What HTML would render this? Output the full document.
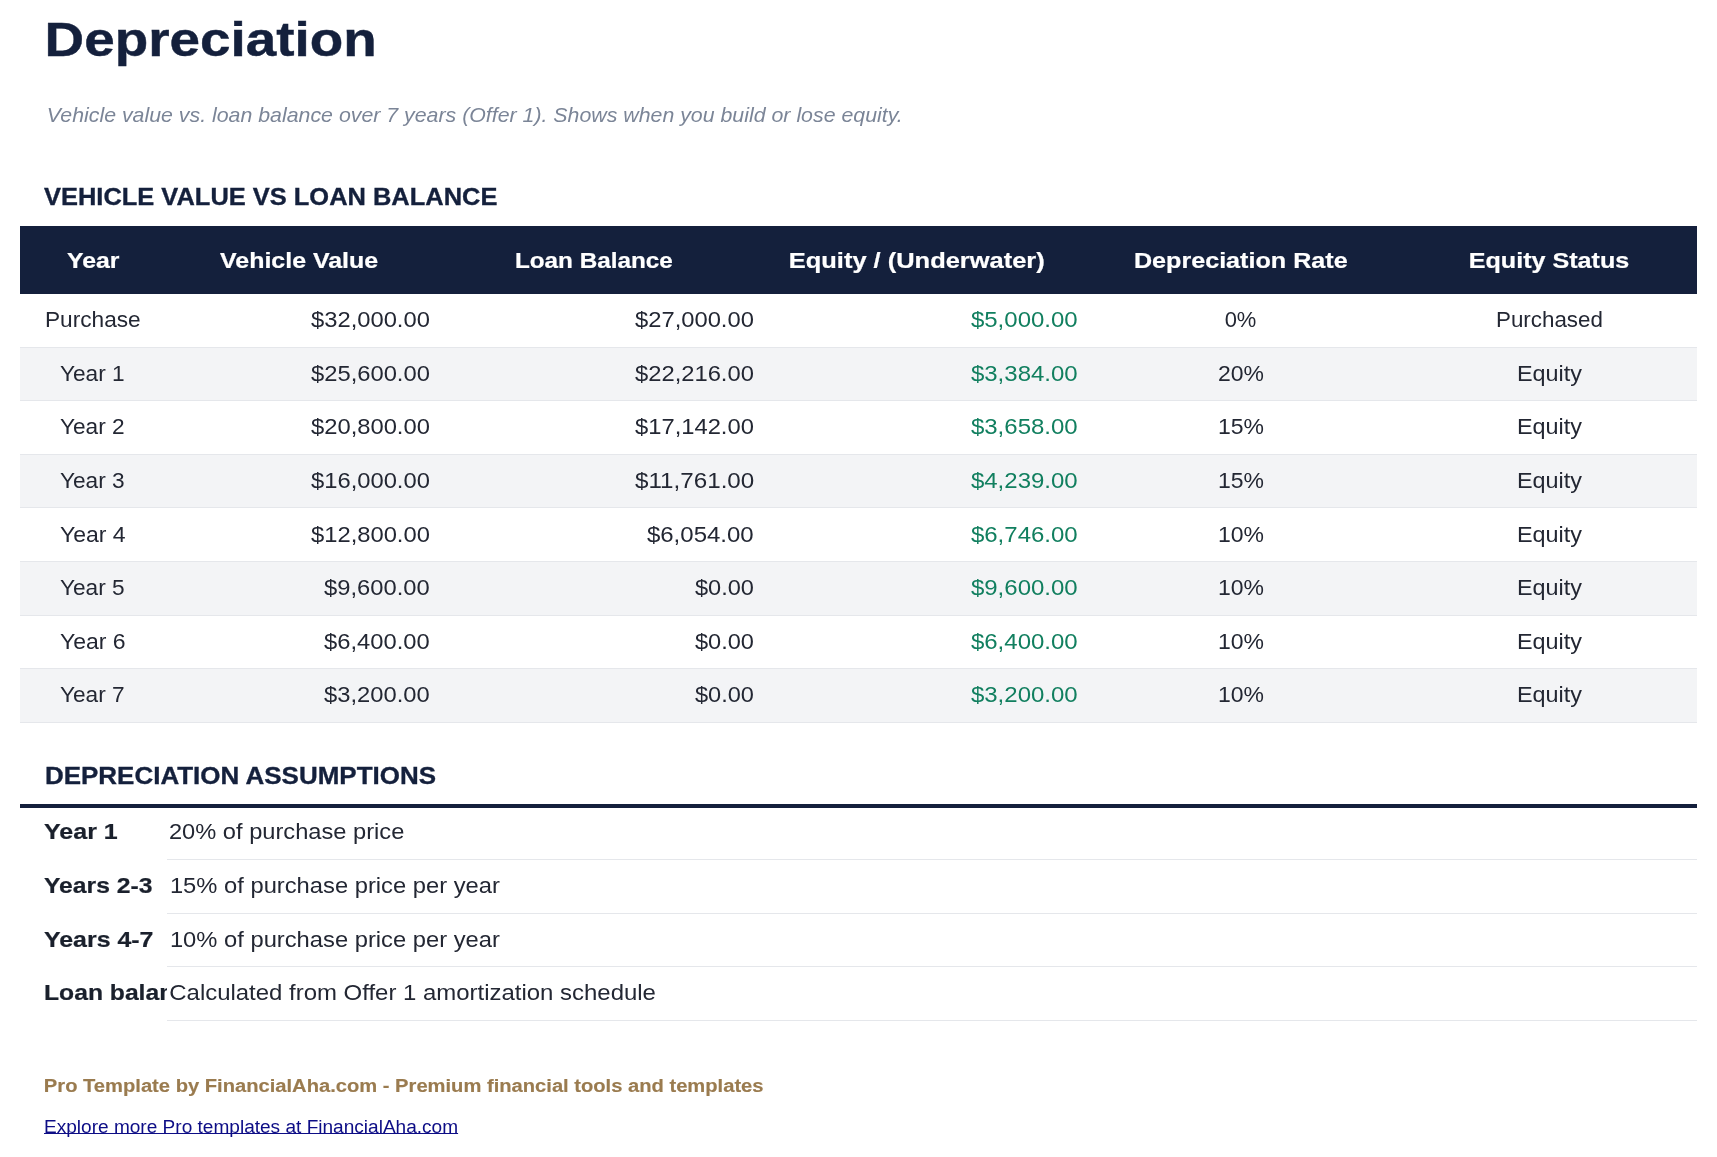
<!DOCTYPE html><html><head><meta charset="utf-8"><style>*{margin:0;padding:0;box-sizing:border-box}
html,body{width:1717px;height:1157px;background:#fff;overflow:hidden;position:relative;font-family:"Liberation Sans", sans-serif}
.t{position:absolute;white-space:nowrap;line-height:1}
.s{display:inline-block;white-space:nowrap}
</style></head><body><div id="wrap" style="position:absolute;left:0;top:0;width:1717px;height:1157px;will-change:transform">
<div style="position:absolute;left:20px;top:226px;width:1677px;height:68px;background:#14203c"></div>
<div style="position:absolute;left:20px;top:294.00px;width:1677px;height:53.60px;background:#ffffff;border-bottom:1px solid #e5e7eb"></div>
<div style="position:absolute;left:20px;top:347.60px;width:1677px;height:53.60px;background:#f3f4f6;border-bottom:1px solid #e5e7eb"></div>
<div style="position:absolute;left:20px;top:401.20px;width:1677px;height:53.60px;background:#ffffff;border-bottom:1px solid #e5e7eb"></div>
<div style="position:absolute;left:20px;top:454.80px;width:1677px;height:53.60px;background:#f3f4f6;border-bottom:1px solid #e5e7eb"></div>
<div style="position:absolute;left:20px;top:508.40px;width:1677px;height:53.60px;background:#ffffff;border-bottom:1px solid #e5e7eb"></div>
<div style="position:absolute;left:20px;top:562.00px;width:1677px;height:53.60px;background:#f3f4f6;border-bottom:1px solid #e5e7eb"></div>
<div style="position:absolute;left:20px;top:615.60px;width:1677px;height:53.60px;background:#ffffff;border-bottom:1px solid #e5e7eb"></div>
<div style="position:absolute;left:20px;top:669.20px;width:1677px;height:53.60px;background:#f3f4f6;border-bottom:1px solid #e5e7eb"></div>
<div style="position:absolute;left:20px;top:804px;width:1677px;height:4px;background:#14203c"></div>
<div style="position:absolute;left:167px;top:859.00px;width:1530px;height:1px;background:#e5e7eb"></div>
<div style="position:absolute;left:167px;top:912.60px;width:1530px;height:1px;background:#e5e7eb"></div>
<div style="position:absolute;left:167px;top:966.20px;width:1530px;height:1px;background:#e5e7eb"></div>
<div style="position:absolute;left:167px;top:1019.80px;width:1530px;height:1px;background:#e5e7eb"></div>
<div class="t" style="top:14.96px;font-size:48.28px;font-weight:bold;-webkit-text-stroke:0.45px #14203c;font-style:normal;color:#14203c;letter-spacing:0px;left:44px;"><span class="s" id="title" style="transform:translateX(0.59px) scaleX(1.1359);transform-origin:left center;">Depreciation</span></div>
<div class="t" style="top:106.07px;font-size:19.68px;font-weight:normal;font-style:italic;color:#7b8597;letter-spacing:0px;left:46.5px;"><span class="s" id="sub" style="transform:translateX(-0.13px) scaleX(1.0840);transform-origin:left center;">Vehicle value vs. loan balance over 7 years (Offer 1). Shows when you build or lose equity.</span></div>
<div class="t" style="top:185.21px;font-size:24.45px;font-weight:bold;-webkit-text-stroke:0.35px #14203c;font-style:normal;color:#14203c;letter-spacing:0px;left:44px;"><span class="s" id="h2a" style="transform:translateX(0.00px) scaleX(1.0414);transform-origin:left center;">VEHICLE VALUE VS LOAN BALANCE</span></div>
<div class="t" style="top:249.65px;font-size:21.95px;font-weight:bold;-webkit-text-stroke:0.22px #ffffff;font-style:normal;color:#ffffff;letter-spacing:0px;left:-307px;width:800px;text-align:center;"><span class="s" id="th0" style="transform:translateX(0.00px) scaleX(1.1304);transform-origin:center center;">Year</span></div>
<div class="t" style="top:249.65px;font-size:21.95px;font-weight:bold;-webkit-text-stroke:0.22px #ffffff;font-style:normal;color:#ffffff;letter-spacing:0px;left:-101px;width:800px;text-align:center;"><span class="s" id="th1" style="transform:translateX(0.57px) scaleX(1.1367);transform-origin:center center;">Vehicle Value</span></div>
<div class="t" style="top:249.65px;font-size:21.95px;font-weight:bold;-webkit-text-stroke:0.22px #ffffff;font-style:normal;color:#ffffff;letter-spacing:0px;left:193.5px;width:800px;text-align:center;"><span class="s" id="th2" style="transform:translateX(0.50px) scaleX(1.1064);transform-origin:center center;">Loan Balance</span></div>
<div class="t" style="top:249.65px;font-size:21.95px;font-weight:bold;-webkit-text-stroke:0.22px #ffffff;font-style:normal;color:#ffffff;letter-spacing:0px;left:517px;width:800px;text-align:center;"><span class="s" id="th3" style="transform:translateX(-0.58px) scaleX(1.1598);transform-origin:center center;">Equity / (Underwater)</span></div>
<div class="t" style="top:249.65px;font-size:21.95px;font-weight:bold;-webkit-text-stroke:0.22px #ffffff;font-style:normal;color:#ffffff;letter-spacing:0px;left:840.5px;width:800px;text-align:center;"><span class="s" id="th4" style="transform:translateX(0.50px) scaleX(1.1459);transform-origin:center center;">Depreciation Rate</span></div>
<div class="t" style="top:249.65px;font-size:21.95px;font-weight:bold;-webkit-text-stroke:0.22px #ffffff;font-style:normal;color:#ffffff;letter-spacing:0px;left:1149.5px;width:800px;text-align:center;"><span class="s" id="th5" style="transform:translateX(-0.07px) scaleX(1.1449);transform-origin:center center;">Equity Status</span></div>
<div class="t" style="top:309.15px;font-size:21.95px;font-weight:normal;font-style:normal;color:#232733;letter-spacing:0px;left:-306.5px;width:800px;text-align:center;"><span class="s" id="r0c0" style="transform:translateX(-0.52px) scaleX(1.0333);transform-origin:center center;">Purchase</span></div>
<div class="t" style="top:309.15px;font-size:21.95px;font-weight:normal;font-style:normal;color:#232733;letter-spacing:0px;right:1287.2px;text-align:right;"><span class="s" id="r0c1" style="transform:translateX(0.07px) scaleX(1.0826);transform-origin:right center;">$32,000.00</span></div>
<div class="t" style="top:309.15px;font-size:21.95px;font-weight:normal;font-style:normal;color:#232733;letter-spacing:0px;right:963px;text-align:right;"><span class="s" id="r0c2" style="transform:translateX(0.08px) scaleX(1.0826);transform-origin:right center;">$27,000.00</span></div>
<div class="t" style="top:309.15px;font-size:21.95px;font-weight:normal;font-style:normal;color:#117f5f;letter-spacing:0px;right:639px;text-align:right;"><span class="s" id="r0c3" style="transform:translateX(0.09px) scaleX(1.0938);transform-origin:right center;">$5,000.00</span></div>
<div class="t" style="top:309.15px;font-size:21.95px;font-weight:normal;font-style:normal;color:#232733;letter-spacing:0px;left:840.5px;width:800px;text-align:center;"><span class="s" id="r0c4" style="">0%</span></div>
<div class="t" style="top:309.15px;font-size:21.95px;font-weight:normal;font-style:normal;color:#232733;letter-spacing:0px;left:1149.5px;width:800px;text-align:center;"><span class="s" id="r0c5" style="transform:translateX(-0.00px) scaleX(1.0194);transform-origin:center center;">Purchased</span></div>
<div class="t" style="top:362.75px;font-size:21.95px;font-weight:normal;font-style:normal;color:#232733;letter-spacing:0px;left:-306.5px;width:800px;text-align:center;"><span class="s" id="r1c0" style="transform:translateX(-1.00px) scaleX(1.0328);transform-origin:center center;">Year 1</span></div>
<div class="t" style="top:362.75px;font-size:21.95px;font-weight:normal;font-style:normal;color:#232733;letter-spacing:0px;right:1287.2px;text-align:right;"><span class="s" id="r1c1" style="transform:translateX(0.07px) scaleX(1.0826);transform-origin:right center;">$25,600.00</span></div>
<div class="t" style="top:362.75px;font-size:21.95px;font-weight:normal;font-style:normal;color:#232733;letter-spacing:0px;right:963px;text-align:right;"><span class="s" id="r1c2" style="transform:translateX(0.08px) scaleX(1.0826);transform-origin:right center;">$22,216.00</span></div>
<div class="t" style="top:362.75px;font-size:21.95px;font-weight:normal;font-style:normal;color:#117f5f;letter-spacing:0px;right:639px;text-align:right;"><span class="s" id="r1c3" style="transform:translateX(0.09px) scaleX(1.0938);transform-origin:right center;">$3,384.00</span></div>
<div class="t" style="top:362.75px;font-size:21.95px;font-weight:normal;font-style:normal;color:#232733;letter-spacing:0px;left:840.5px;width:800px;text-align:center;"><span class="s" id="r1c4" style="transform:translateX(-0.00px) scaleX(1.0465);transform-origin:center center;">20%</span></div>
<div class="t" style="top:362.75px;font-size:21.95px;font-weight:normal;font-style:normal;color:#232733;letter-spacing:0px;left:1149.5px;width:800px;text-align:center;"><span class="s" id="r1c5" style="transform:translateX(-0.03px) scaleX(1.0667);transform-origin:center center;">Equity</span></div>
<div class="t" style="top:416.35px;font-size:21.95px;font-weight:normal;font-style:normal;color:#232733;letter-spacing:0px;left:-306.5px;width:800px;text-align:center;"><span class="s" id="r2c0" style="transform:translateX(-1.00px) scaleX(1.0328);transform-origin:center center;">Year 2</span></div>
<div class="t" style="top:416.35px;font-size:21.95px;font-weight:normal;font-style:normal;color:#232733;letter-spacing:0px;right:1287.2px;text-align:right;"><span class="s" id="r2c1" style="transform:translateX(0.07px) scaleX(1.0826);transform-origin:right center;">$20,800.00</span></div>
<div class="t" style="top:416.35px;font-size:21.95px;font-weight:normal;font-style:normal;color:#232733;letter-spacing:0px;right:963px;text-align:right;"><span class="s" id="r2c2" style="transform:translateX(0.08px) scaleX(1.0826);transform-origin:right center;">$17,142.00</span></div>
<div class="t" style="top:416.35px;font-size:21.95px;font-weight:normal;font-style:normal;color:#117f5f;letter-spacing:0px;right:639px;text-align:right;"><span class="s" id="r2c3" style="transform:translateX(0.09px) scaleX(1.0938);transform-origin:right center;">$3,658.00</span></div>
<div class="t" style="top:416.35px;font-size:21.95px;font-weight:normal;font-style:normal;color:#232733;letter-spacing:0px;left:840.5px;width:800px;text-align:center;"><span class="s" id="r2c4" style="transform:translateX(-0.02px) scaleX(1.0476);transform-origin:center center;">15%</span></div>
<div class="t" style="top:416.35px;font-size:21.95px;font-weight:normal;font-style:normal;color:#232733;letter-spacing:0px;left:1149.5px;width:800px;text-align:center;"><span class="s" id="r2c5" style="transform:translateX(-0.03px) scaleX(1.0667);transform-origin:center center;">Equity</span></div>
<div class="t" style="top:469.95px;font-size:21.95px;font-weight:normal;font-style:normal;color:#232733;letter-spacing:0px;left:-306.5px;width:800px;text-align:center;"><span class="s" id="r3c0" style="transform:translateX(-1.00px) scaleX(1.0328);transform-origin:center center;">Year 3</span></div>
<div class="t" style="top:469.95px;font-size:21.95px;font-weight:normal;font-style:normal;color:#232733;letter-spacing:0px;right:1287.2px;text-align:right;"><span class="s" id="r3c1" style="transform:translateX(0.07px) scaleX(1.0826);transform-origin:right center;">$16,000.00</span></div>
<div class="t" style="top:469.95px;font-size:21.95px;font-weight:normal;font-style:normal;color:#232733;letter-spacing:0px;right:963px;text-align:right;"><span class="s" id="r3c2" style="transform:translateX(0.10px) scaleX(1.1028);transform-origin:right center;">$11,761.00</span></div>
<div class="t" style="top:469.95px;font-size:21.95px;font-weight:normal;font-style:normal;color:#117f5f;letter-spacing:0px;right:639px;text-align:right;"><span class="s" id="r3c3" style="transform:translateX(0.09px) scaleX(1.0938);transform-origin:right center;">$4,239.00</span></div>
<div class="t" style="top:469.95px;font-size:21.95px;font-weight:normal;font-style:normal;color:#232733;letter-spacing:0px;left:840.5px;width:800px;text-align:center;"><span class="s" id="r3c4" style="transform:translateX(-0.02px) scaleX(1.0476);transform-origin:center center;">15%</span></div>
<div class="t" style="top:469.95px;font-size:21.95px;font-weight:normal;font-style:normal;color:#232733;letter-spacing:0px;left:1149.5px;width:800px;text-align:center;"><span class="s" id="r3c5" style="transform:translateX(-0.03px) scaleX(1.0667);transform-origin:center center;">Equity</span></div>
<div class="t" style="top:523.55px;font-size:21.95px;font-weight:normal;font-style:normal;color:#232733;letter-spacing:0px;left:-306.5px;width:800px;text-align:center;"><span class="s" id="r4c0" style="transform:translateX(-0.50px) scaleX(1.0492);transform-origin:center center;">Year 4</span></div>
<div class="t" style="top:523.55px;font-size:21.95px;font-weight:normal;font-style:normal;color:#232733;letter-spacing:0px;right:1287.2px;text-align:right;"><span class="s" id="r4c1" style="transform:translateX(0.07px) scaleX(1.0826);transform-origin:right center;">$12,800.00</span></div>
<div class="t" style="top:523.55px;font-size:21.95px;font-weight:normal;font-style:normal;color:#232733;letter-spacing:0px;right:963px;text-align:right;"><span class="s" id="r4c2" style="transform:translateX(0.09px) scaleX(1.0938);transform-origin:right center;">$6,054.00</span></div>
<div class="t" style="top:523.55px;font-size:21.95px;font-weight:normal;font-style:normal;color:#117f5f;letter-spacing:0px;right:639px;text-align:right;"><span class="s" id="r4c3" style="transform:translateX(0.09px) scaleX(1.0938);transform-origin:right center;">$6,746.00</span></div>
<div class="t" style="top:523.55px;font-size:21.95px;font-weight:normal;font-style:normal;color:#232733;letter-spacing:0px;left:840.5px;width:800px;text-align:center;"><span class="s" id="r4c4" style="transform:translateX(-0.02px) scaleX(1.0476);transform-origin:center center;">10%</span></div>
<div class="t" style="top:523.55px;font-size:21.95px;font-weight:normal;font-style:normal;color:#232733;letter-spacing:0px;left:1149.5px;width:800px;text-align:center;"><span class="s" id="r4c5" style="transform:translateX(-0.03px) scaleX(1.0667);transform-origin:center center;">Equity</span></div>
<div class="t" style="top:577.15px;font-size:21.95px;font-weight:normal;font-style:normal;color:#232733;letter-spacing:0px;left:-306.5px;width:800px;text-align:center;"><span class="s" id="r5c0" style="transform:translateX(-1.00px) scaleX(1.0328);transform-origin:center center;">Year 5</span></div>
<div class="t" style="top:577.15px;font-size:21.95px;font-weight:normal;font-style:normal;color:#232733;letter-spacing:0px;right:1287.2px;text-align:right;"><span class="s" id="r5c1" style="transform:translateX(0.07px) scaleX(1.0825);transform-origin:right center;">$9,600.00</span></div>
<div class="t" style="top:577.15px;font-size:21.95px;font-weight:normal;font-style:normal;color:#232733;letter-spacing:0px;right:963px;text-align:right;"><span class="s" id="r5c2" style="transform:translateX(0.07px) scaleX(1.0741);transform-origin:right center;">$0.00</span></div>
<div class="t" style="top:577.15px;font-size:21.95px;font-weight:normal;font-style:normal;color:#117f5f;letter-spacing:0px;right:639px;text-align:right;"><span class="s" id="r5c3" style="transform:translateX(0.09px) scaleX(1.0938);transform-origin:right center;">$9,600.00</span></div>
<div class="t" style="top:577.15px;font-size:21.95px;font-weight:normal;font-style:normal;color:#232733;letter-spacing:0px;left:840.5px;width:800px;text-align:center;"><span class="s" id="r5c4" style="transform:translateX(-0.02px) scaleX(1.0476);transform-origin:center center;">10%</span></div>
<div class="t" style="top:577.15px;font-size:21.95px;font-weight:normal;font-style:normal;color:#232733;letter-spacing:0px;left:1149.5px;width:800px;text-align:center;"><span class="s" id="r5c5" style="transform:translateX(-0.03px) scaleX(1.0667);transform-origin:center center;">Equity</span></div>
<div class="t" style="top:630.75px;font-size:21.95px;font-weight:normal;font-style:normal;color:#232733;letter-spacing:0px;left:-306.5px;width:800px;text-align:center;"><span class="s" id="r6c0" style="transform:translateX(-0.50px) scaleX(1.0492);transform-origin:center center;">Year 6</span></div>
<div class="t" style="top:630.75px;font-size:21.95px;font-weight:normal;font-style:normal;color:#232733;letter-spacing:0px;right:1287.2px;text-align:right;"><span class="s" id="r6c1" style="transform:translateX(0.07px) scaleX(1.0825);transform-origin:right center;">$6,400.00</span></div>
<div class="t" style="top:630.75px;font-size:21.95px;font-weight:normal;font-style:normal;color:#232733;letter-spacing:0px;right:963px;text-align:right;"><span class="s" id="r6c2" style="transform:translateX(0.07px) scaleX(1.0741);transform-origin:right center;">$0.00</span></div>
<div class="t" style="top:630.75px;font-size:21.95px;font-weight:normal;font-style:normal;color:#117f5f;letter-spacing:0px;right:639px;text-align:right;"><span class="s" id="r6c3" style="transform:translateX(0.09px) scaleX(1.0938);transform-origin:right center;">$6,400.00</span></div>
<div class="t" style="top:630.75px;font-size:21.95px;font-weight:normal;font-style:normal;color:#232733;letter-spacing:0px;left:840.5px;width:800px;text-align:center;"><span class="s" id="r6c4" style="transform:translateX(-0.02px) scaleX(1.0476);transform-origin:center center;">10%</span></div>
<div class="t" style="top:630.75px;font-size:21.95px;font-weight:normal;font-style:normal;color:#232733;letter-spacing:0px;left:1149.5px;width:800px;text-align:center;"><span class="s" id="r6c5" style="transform:translateX(-0.03px) scaleX(1.0667);transform-origin:center center;">Equity</span></div>
<div class="t" style="top:684.35px;font-size:21.95px;font-weight:normal;font-style:normal;color:#232733;letter-spacing:0px;left:-306.5px;width:800px;text-align:center;"><span class="s" id="r7c0" style="transform:translateX(-1.00px) scaleX(1.0328);transform-origin:center center;">Year 7</span></div>
<div class="t" style="top:684.35px;font-size:21.95px;font-weight:normal;font-style:normal;color:#232733;letter-spacing:0px;right:1287.2px;text-align:right;"><span class="s" id="r7c1" style="transform:translateX(0.07px) scaleX(1.0825);transform-origin:right center;">$3,200.00</span></div>
<div class="t" style="top:684.35px;font-size:21.95px;font-weight:normal;font-style:normal;color:#232733;letter-spacing:0px;right:963px;text-align:right;"><span class="s" id="r7c2" style="transform:translateX(0.07px) scaleX(1.0741);transform-origin:right center;">$0.00</span></div>
<div class="t" style="top:684.35px;font-size:21.95px;font-weight:normal;font-style:normal;color:#117f5f;letter-spacing:0px;right:639px;text-align:right;"><span class="s" id="r7c3" style="transform:translateX(0.09px) scaleX(1.0938);transform-origin:right center;">$3,200.00</span></div>
<div class="t" style="top:684.35px;font-size:21.95px;font-weight:normal;font-style:normal;color:#232733;letter-spacing:0px;left:840.5px;width:800px;text-align:center;"><span class="s" id="r7c4" style="transform:translateX(-0.02px) scaleX(1.0476);transform-origin:center center;">10%</span></div>
<div class="t" style="top:684.35px;font-size:21.95px;font-weight:normal;font-style:normal;color:#232733;letter-spacing:0px;left:1149.5px;width:800px;text-align:center;"><span class="s" id="r7c5" style="transform:translateX(-0.03px) scaleX(1.0667);transform-origin:center center;">Equity</span></div>
<div class="t" style="top:763.61px;font-size:24.45px;font-weight:bold;-webkit-text-stroke:0.35px #14203c;font-style:normal;color:#14203c;letter-spacing:0px;left:44px;"><span class="s" id="h2b" style="transform:translateX(0.94px) scaleX(1.0628);transform-origin:left center;">DEPRECIATION ASSUMPTIONS</span></div>
<div class="t" style="top:821.35px;font-size:21.95px;font-weight:bold;-webkit-text-stroke:0.22px #1a202c;font-style:normal;color:#1a202c;letter-spacing:0px;left:44px;"><span style="display:inline-block;width:123px;overflow:hidden;vertical-align:top"><span class="s" id="al0" style="transform:translateX(0.00px) scaleX(1.1406);transform-origin:left center;">Year 1</span></span></div>
<div class="t" style="top:821.35px;font-size:21.95px;font-weight:normal;font-style:normal;color:#232733;letter-spacing:0px;left:169px;"><span class="s" id="av0" style="transform:translateX(-0.08px) scaleX(1.0783);transform-origin:left center;">20% of purchase price</span></div>
<div class="t" style="top:874.95px;font-size:21.95px;font-weight:bold;-webkit-text-stroke:0.22px #1a202c;font-style:normal;color:#1a202c;letter-spacing:0px;left:44px;"><span style="display:inline-block;width:123px;overflow:hidden;vertical-align:top"><span class="s" id="al1" style="transform:translateX(0.00px) scaleX(1.1250);transform-origin:left center;">Years 2-3</span></span></div>
<div class="t" style="top:874.95px;font-size:21.95px;font-weight:normal;font-style:normal;color:#232733;letter-spacing:0px;left:169px;"><span class="s" id="av1" style="transform:translateX(0.92px) scaleX(1.0822);transform-origin:left center;">15% of purchase price per year</span></div>
<div class="t" style="top:928.55px;font-size:21.95px;font-weight:bold;-webkit-text-stroke:0.22px #1a202c;font-style:normal;color:#1a202c;letter-spacing:0px;left:44px;"><span style="display:inline-block;width:123px;overflow:hidden;vertical-align:top"><span class="s" id="al2" style="transform:translateX(0.00px) scaleX(1.1354);transform-origin:left center;">Years 4-7</span></span></div>
<div class="t" style="top:928.55px;font-size:21.95px;font-weight:normal;font-style:normal;color:#232733;letter-spacing:0px;left:169px;"><span class="s" id="av2" style="transform:translateX(0.92px) scaleX(1.0822);transform-origin:left center;">10% of purchase price per year</span></div>
<div class="t" style="top:982.15px;font-size:21.95px;font-weight:bold;-webkit-text-stroke:0.22px #1a202c;font-style:normal;color:#1a202c;letter-spacing:0px;left:44px;"><span style="display:inline-block;width:123px;overflow:hidden;vertical-align:top"><span class="s" id="al3" style="transform:translateX(0.00px) scaleX(1.1250);transform-origin:left center;">Loan balance</span></span></div>
<div class="t" style="top:982.15px;font-size:21.95px;font-weight:normal;font-style:normal;color:#232733;letter-spacing:0px;left:169px;"><span class="s" id="av3" style="transform:translateX(0.27px) scaleX(1.0915);transform-origin:left center;">Calculated from Offer 1 amortization schedule</span></div>
<div class="t" style="top:1078.20px;font-size:17.77px;font-weight:bold;-webkit-text-stroke:0.15px #9a7b4f;font-style:normal;color:#9a7b4f;letter-spacing:0px;left:44px;"><span class="s" id="foot" style="transform:translateX(-0.13px) scaleX(1.1343);transform-origin:left center;">Pro Template by FinancialAha.com - Premium financial tools and templates</span></div>
<div class="t" style="top:1119.40px;font-size:17.77px;font-weight:normal;font-style:normal;color:#0d0d86;letter-spacing:0px;left:44px;"><span class="s" id="link" style="transform:translateX(0.00px) scaleX(1.0725);transform-origin:left center;text-decoration:underline;text-decoration-skip-ink:none;text-decoration-thickness:1px;text-underline-offset:0px;">Explore more Pro templates at FinancialAha.com</span></div>
</div></body></html>
